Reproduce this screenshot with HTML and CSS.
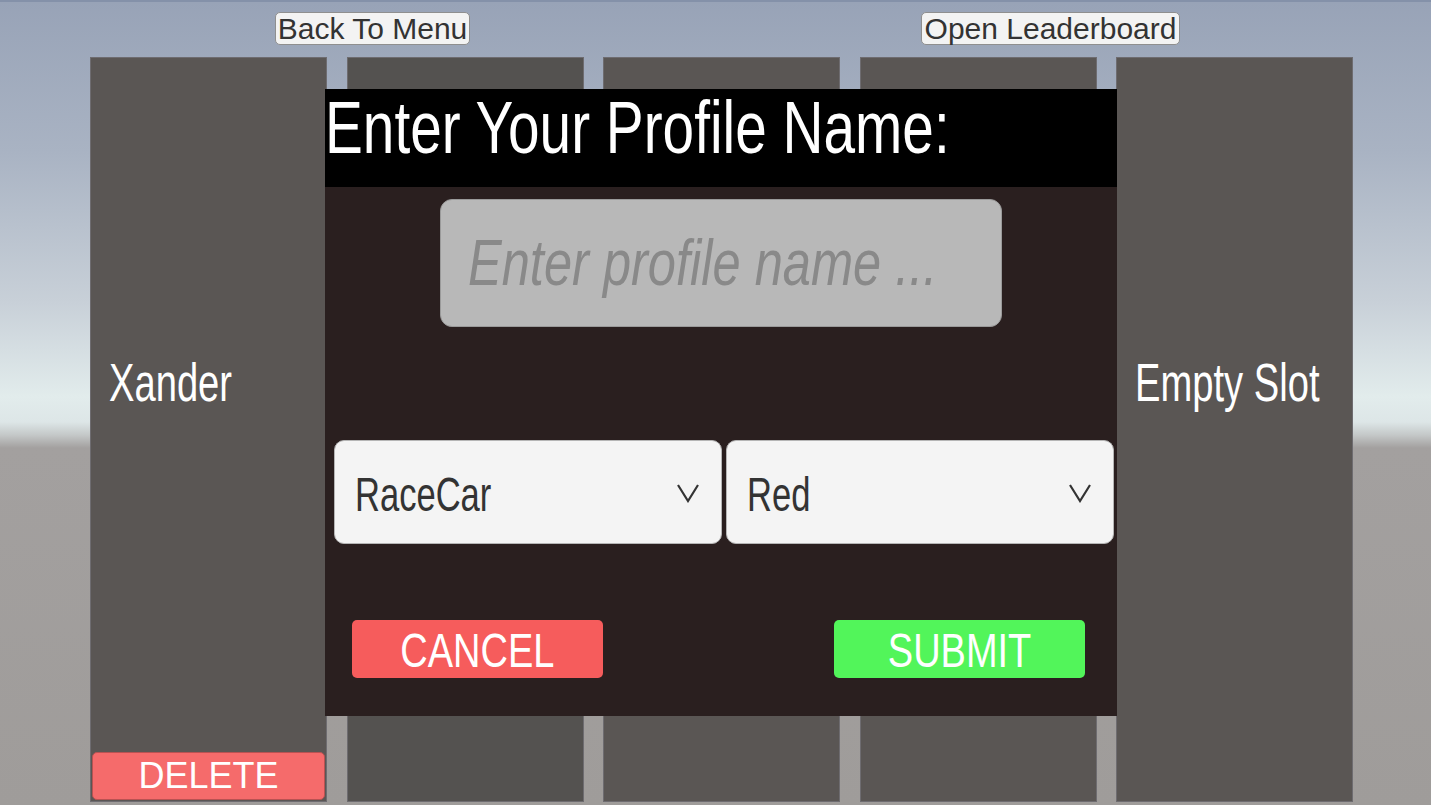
FILE: index.html
```html
<!DOCTYPE html>
<html lang="en">
<head>
    <meta charset="UTF-8">
    <meta name="viewport" content="width=device-width, initial-scale=1.0">
    <title>Profile Select</title>
    <link rel="stylesheet" href="styles.css">
</head>
<body>
    <div class="stage">
        <div class="topbar">
            <button class="menu-btn back">Back To Menu</button>
            <button class="menu-btn board">Open Leaderboard</button>
        </div>

        <div class="slots">
            <div class="slot">
                <span class="slot-name"><span class="tmp">Xander</span></span>
                <button class="delete">DELETE</button>
            </div>
            <div class="slot dim"></div>
            <div class="slot"></div>
            <div class="slot"></div>
            <div class="slot">
                <span class="slot-name"><span class="tmp">Empty Slot</span></span>
            </div>
        </div>

        <!-- new profile dialog -->
        <div class="modal">
            <div class="modal-header">
                <span class="tmp title">Enter Your Profile Name:</span>
            </div>
            <div class="modal-body">
                <div class="name-field">
                    <span class="tmp placeholder">Enter profile name ...</span>
                </div>

                <div class="dropdowns">
                    <div class="dropdown">
                        <span class="tmp choice">RaceCar</span>
                        <svg class="chevron" width="24" height="20" viewBox="0 0 24 20">
                            <polyline points="2,2 12,18 22,2" fill="none" stroke="#333" stroke-width="2.2"/>
                        </svg>
                    </div>
                    <div class="dropdown">
                        <span class="tmp choice">Red</span>
                        <svg class="chevron" width="24" height="20" viewBox="0 0 24 20">
                            <polyline points="2,2 12,18 22,2" fill="none" stroke="#333" stroke-width="2.2"/>
                        </svg>
                    </div>
                </div>

                <div class="actions">
                    <button class="action cancel"><span class="tmp">CANCEL</span></button>
                    <button class="action submit"><span class="tmp">SUBMIT</span></button>
                </div>
            </div>
        </div>
    </div>
</body>
</html>
```

FILE: styles.css
```css
* {
    box-sizing: border-box;
}
body {
    margin: 0;
    font-family: "Liberation Sans", Arial, sans-serif;
    overflow: hidden;
}
button {
    font-family: "Liberation Sans", Arial, sans-serif;
    border: none;
    padding: 0;
    cursor: pointer;
}
.stage {
    position: relative;
    width: 1431px;
    height: 805px;
    border-top: 2px solid #8491a9;
    background: linear-gradient(to bottom,
        #98a3b7 0px,
        #a9b3c3 150px,
        #c8d0d8 300px,
        #e2ecec 395px,
        #dde6e7 420px,
        #c4c8c8 433px,
        #a3a09f 446px,
        #9f9c9a 100%);
}

/* TextMeshPro-ish condensed text */
.tmp {
    display: inline-block;
    white-space: nowrap;
    transform-origin: left center;
}

.topbar {
    display: flex;
    height: 55px;
    padding: 10px 0 0 275px;
}
.menu-btn {
    height: 33px;
    background-color: #f3f3f3;
    border: 1px solid #8f8f8f;
    border-radius: 5px;
    color: #333;
    font-size: 30px;
    line-height: 31px;
}
.back {
    width: 195px;
}
.board {
    width: 259px;
    margin-left: 451px;
}

.slots {
    display: flex;
    gap: 19.5px;
    margin-left: 90px;
    height: 745px;
}
.slot {
    display: flex;
    flex-direction: column;
    width: 237px;
    background-color: #5a5654;
    border: 1px solid #6e6c70;
}
.slot.dim {
    background-color: #545250;
}
.slot-name {
    padding: 298px 0 0 18px;
    color: #fff;
    font-size: 53px;
    line-height: 53px;
}
.slot-name .tmp {
    transform: scaleX(0.72);
}
.delete {
    margin: auto 1px 1px 1px;
    height: 48px;
    background-color: #f56b6b;
    border: 1px solid #b95252;
    border-radius: 5px;
    color: #fff;
    font-size: 36px;
    line-height: 46px;
}

.modal {
    position: absolute;
    left: 325px;
    top: 87px;
    width: 792px;
    height: 627px;
    background-color: #2a1f1f;
}
.modal-header {
    height: 98px;
    padding-top: 2px;
    background-color: #000;
}
.title {
    margin-left: 0;
    color: #fff;
    font-size: 74px;
    line-height: 74px;
    transform: scaleX(0.767);
}
.modal-body {
    display: flex;
    flex-direction: column;
    padding-top: 12px;
}
.name-field {
    display: flex;
    align-items: center;
    width: 562px;
    height: 128px;
    margin-left: 115px;
    padding-left: 27px;
    background-color: #b8b8b8;
    border: 1px solid #9a9a9a;
    border-radius: 12px;
}
.placeholder {
    color: #898989;
    font-style: italic;
    font-size: 64px;
    line-height: 64px;
    transform: scaleX(0.79);
}

.dropdowns {
    display: flex;
    gap: 4px;
    margin: 113px 0 0 9px;
}
.dropdown {
    display: flex;
    align-items: center;
    justify-content: space-between;
    width: 388px;
    height: 104px;
    padding: 0 21px 0 20px;
    background-color: #f4f4f4;
    border: 1px solid #b5b5b5;
    border-radius: 10px;
}
.choice {
    margin-top: 4px;
    color: #333;
    font-size: 49px;
    line-height: 49px;
    transform: scaleX(0.705);
}
.chevron {
    margin-top: 2px;
}

.actions {
    display: flex;
    justify-content: space-between;
    margin: 76px 32px 0 27px;
}
.action {
    display: flex;
    align-items: center;
    justify-content: center;
    width: 251px;
    height: 58px;
    border-radius: 5px;
    color: #fff;
    font-size: 49px;
    line-height: 49px;
}
.action .tmp {
    margin-top: 2px;
    transform: scaleX(0.775);
    transform-origin: center;
}
.cancel {
    background-color: #f65c5c;
}
.submit {
    background-color: #52f55a;
}
```
